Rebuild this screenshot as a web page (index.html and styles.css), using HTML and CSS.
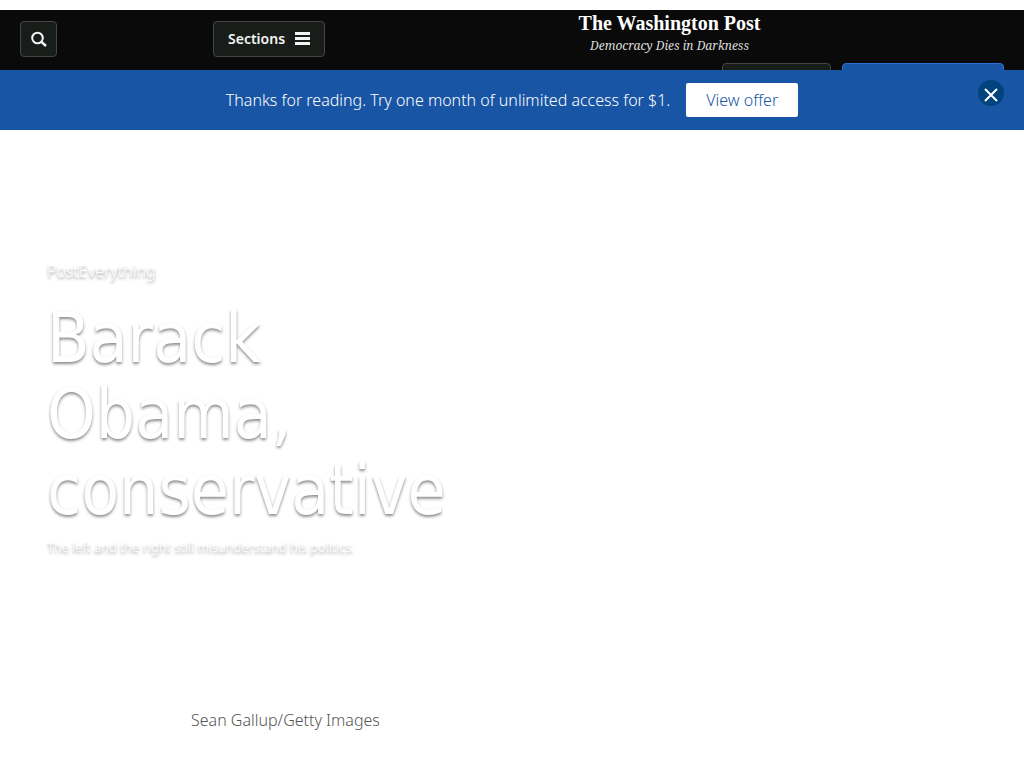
FILE: index.html
```html
<!DOCTYPE html>
<html lang="en">
<head>
<meta charset="utf-8">
<title>Barack Obama, conservative - The Washington Post</title>
<link rel="stylesheet" href="styles.css">
</head>
<body>
<header class="site-header">
  <nav class="nav">
    <div class="nav-side">
      <button class="btn btn-icon" type="button" aria-label="Search">
        <svg width="16" height="16" viewBox="0 0 16 16" fill="none" stroke="currentColor" stroke-width="2"><circle cx="6.500" cy="7" r="5.300"/><path d="M10 10.500l5 4.500" stroke-width="2.400"/></svg>
      </button>
      <button class="btn btn-sections" type="button">Sections
        <svg width="15" height="14" viewBox="0 0 15 14" fill="currentColor"><path d="M0 0h15v3H0zM0 5h15v3H0zM0 10h15v3H0z"/></svg>
      </button>
    </div>
    <div class="brand">
      <a class="logo" href="#">The Washington Post</a>
      <span class="tagline">Democracy Dies in Darkness</span>
    </div>
  </nav>
  <div class="account">
    <button class="btn btn-account" type="button" aria-label="Sign in"></button>
    <button class="btn btn-subscribe" type="button" aria-label="Subscribe"></button>
  </div>
</header>
<aside class="offer">
  <p class="offer-text">Thanks for reading. Try one month of unlimited access for $1.</p>
  <a class="offer-link" href="#">View offer</a>
  <button class="close" type="button" aria-label="Close">
    <svg width="14" height="14" viewBox="0 0 14 14" fill="none" stroke="currentColor" stroke-width="2"><path d="M1 1l12 12M13 1L1 13"/></svg>
  </button>
</aside>
<main class="hero">
  <a class="kicker" href="#">PostEverything</a>
  <h1 class="headline">Barack Obama, conservative</h1>
  <p class="deck">The left and the right still misunderstand his politics.</p>
</main>
<p class="credit">Sean Gallup/Getty Images</p>
</body>
</html>
```
FILE: styles.css
```css
* { box-sizing: border-box; }
body { margin: 0; padding-top: 10px; background: #fff; color: #555; font: 300 16px/24px "Noto Sans", sans-serif; }
p, h1 { margin: 0; }
a { color: inherit; text-decoration: none; }
.site-header { height: 60px; overflow: hidden; background: #0a0a0a; color: #fff; padding: 0 20px; }
.nav { display: flex; height: 53px; align-items: flex-start; }
.nav-side { display: flex; justify-content: space-between; width: 31%; padding-top: 11px; }
.btn { display: flex; align-items: center; justify-content: center; height: 36px; border: 1px solid #444744; border-radius: 4px; background: #181d19; color: #f4f4f4; font: 600 14px/20px "Noto Sans", sans-serif; }
.btn-icon { width: 37px; padding: 0; }
.btn-sections { width: 112px; gap: 10px; padding: 0; }
.brand { flex: 1; display: flex; flex-direction: column; align-items: center; padding-left: 10px; }
.logo { font: 700 20px/26px "Liberation Serif", serif; }
.tagline { color: #ddd; font: italic 12px/20px "Noto Serif", "Liberation Serif", serif; }
.account { display: flex; justify-content: flex-end; gap: 11px; }
.btn-account { width: 109px; }
.btn-subscribe { width: 162px; background: #1955a5; border-color: #2f70d8; }
.offer { position: relative; display: flex; align-items: center; justify-content: center; gap: 16px; min-height: 60px; background: #1955a5; color: #fff; }
.offer-link { padding: 5px 20px; border-radius: 2px; background: #fff; color: #1955a5; }
.close { position: absolute; top: 10px; right: 20px; display: flex; align-items: center; justify-content: center; width: 26px; height: 26px; padding: 4px 0 0; border: 0; border-radius: 50%; background: #00437d; color: #fff; }
.hero { max-width: 500px; padding: 129px 47px 0; color: #fff; text-shadow: 0 2px 3px rgba(0, 0, 0, 0.45); }
.kicker { display: block; }
.headline { margin-top: 17px; font-family: "DejaVu Sans Condensed", "Noto Sans", sans-serif; font-size: 69px; font-weight: 400; line-height: 76px; }
.deck { margin-top: 7px; font-size: 13px; }
.credit { padding: 149px 191px 36px; }
```
